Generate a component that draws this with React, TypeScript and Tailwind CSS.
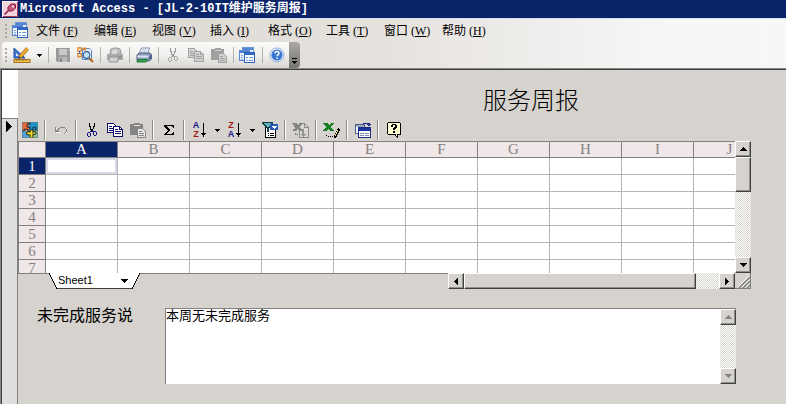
import type { ReactNode } from "react"

const menus = [
  { text: "文件", hot: "F" },
  { text: "编辑", hot: "E" },
  { text: "视图", hot: "V" },
  { text: "插入", hot: "I" },
  { text: "格式", hot: "O" },
  { text: "工具", hot: "T" },
  { text: "窗口", hot: "W" },
  { text: "帮助", hot: "H" },
]

const columns = ["A", "B", "C", "D", "E", "F", "G", "H", "I", "J"]
const rows = [1, 2, 3, 4, 5, 6, 7]

type IconProps = { children: ReactNode; w?: number; h?: number; smooth?: boolean }

function Svg({ children, w = 16, h = 16, smooth = false }: IconProps) {
  return (
    <svg width={w} height={h} viewBox={`0 0 ${w} ${h}`} fill="none" shapeRendering={smooth ? "auto" : "crispEdges"} aria-hidden="true">
      {children}
    </svg>
  )
}

function AccessIcon() {
  return (
    <Svg smooth>
      <rect x="0" y="0" width="16" height="16" fill="#f0d3dc" />
      <path d="M.500 16V.500H16" stroke="#fbeef2" />
      <path d="M1 15.500h14.500V1" stroke="#a23c5f" />
      <path d="M2.500 13.500l5-5" stroke="#8e1c42" strokeWidth="1.600" />
      <path d="M6 9V6l3-3h4l.500 1v3l-3 3H7z" fill="#c4587b" stroke="#8e1c42" />
      <path d="M10 4.500h2v2h-2z" fill="#f4dce4" />
    </Svg>
  )
}

function FormsIcon() {
  return (
    <Svg w={17} h={17}>
      <rect x="3.500" y="0.500" width="11" height="9" fill="#e3edfc" stroke="#6a94d6" />
      <path d="M4 1h10v2H4z" fill="#5586d4" />
      <rect x="0.500" y="3.500" width="10" height="10" fill="#e9f1fd" stroke="#5c88cf" />
      <path d="M1 4h9v2H1z" fill="#4a7fd3" />
      <path d="M2 8h2M2 10h2M2 12h2" stroke="#86a9df" />
      <rect x="5.500" y="5.500" width="10" height="10" fill="#f8fbff" stroke="#2f61b5" />
      <path d="M6 6h9v2H6z" fill="#2f69cc" />
      <path d="M7 10.500h2M10 10.500h4M7 13.500h2M10 13.500h4" stroke="#6f98db" />
    </Svg>
  )
}

function DesignIcon() {
  return (
    <Svg w={18} smooth>
      <path d="M1 1v10h11z" fill="#3d77cf" stroke="#1f4f9f" />
      <path d="M3 6v3h3z" fill="#eef3fb" />
      <path d="M14.500 1.500L7 10" stroke="#9c6410" strokeWidth="3.600" />
      <path d="M14.500 1.500L7 10" stroke="#f7b233" strokeWidth="2.200" />
      <path d="M5 12l1-3 2 2z" fill="#6b4a16" />
      <rect x="1" y="12.500" width="16" height="3" fill="#f3c057" stroke="#a57018" />
      <path d="M4 13v1M7 13v1M10 13v1M13 13v1" stroke="#7d5414" />
    </Svg>
  )
}

function SaveIcon() {
  return (
    <Svg>
      <path d="M1 1h14v14H2l-1-1z" fill="#9b9b9b" />
      <path d="M4 2h8v6H4z" fill="#c9c9c9" />
      <path d="M4 10h8v5H4z" fill="#b9b9b9" />
      <path d="M5 11h2v4H5z" fill="#878787" />
      <path d="M14 2h1v2h-1z" fill="#c9c9c9" />
    </Svg>
  )
}

function PreviewIcon() {
  return (
    <Svg w={17} smooth>
      <path d="M5.500 1.500h7l2 2v9h-9z" fill="#f8fbff" stroke="#5c83c2" />
      <path d="M7 4h5M7 10h4" stroke="#a5bde2" />
      <rect x="0.800" y="0.800" width="3.400" height="3.400" fill="#fbd9a1" stroke="#cd741c" />
      <rect x="0.800" y="6.500" width="3.400" height="3.400" fill="#fbd9a1" stroke="#cd741c" />
      <rect x="6" y="0.500" width="3" height="3" fill="#e9872d" />
      <path d="M2.500 4v3" stroke="#3d6fbd" />
      <circle cx="9.500" cy="8" r="3.300" fill="#c1e4f7" stroke="#30629f" strokeWidth="1.200" />
      <path d="M12 11l4 4" stroke="#b06a22" strokeWidth="2.200" />
    </Svg>
  )
}

function MailPrintIcon() {
  return (
    <Svg smooth>
      <path d="M3 7V5q0-4 4-4h3q4 0 4 4v2z" fill="#bdbdbd" stroke="#a0a0a0" />
      <path d="M5 7V4q1-1.500 3-1.500h2v4.500z" fill="#d9d9d9" />
      <path d="M0 7h16v6H0z" fill="#a9a9a9" />
      <path d="M2 10h9v5H2z" fill="#cfcfcf" stroke="#979797" />
      <path d="M12 9h2v2h-2z" fill="#888" />
    </Svg>
  )
}

function PrintIcon() {
  return (
    <Svg smooth>
      <path d="M5.500 1h8l-2 6H3z" fill="#fcfdff" stroke="#7c8db0" />
      <path d="M6 3h5M5.500 5h5" stroke="#a7b6d3" />
      <path d="M1 8l2-2h11l1.500 1.500V12L13 14H1z" fill="#8c9bbb" stroke="#4e5f88" />
      <path d="M1.500 8.500h11v2h-11z" fill="#dbe3f2" />
      <path d="M2 12.500h9.500l-1.500 2.500H1z" fill="#35a54c" stroke="#1e7a35" />
      <path d="M13 9l2-1.500v4L13 13z" fill="#53658f" />
    </Svg>
  )
}

function CutIcon({ color, handle }: { color: string; handle: string }) {
  return (
    <Svg>
      <path d="M5 1h1v3h1v3h1v3H7V8H6V5H5zM10 1h1v4h-1v2H9v2H8V7h1V4h1z" fill={color} />
      <path d="M6 9h4v1H6z" fill={handle} />
      <path d="M4 10h2v1H4zM3 11h1v3H3zM4 14h2v1H4zM6 11h1v3H6zM10 9h2v1h-2zM9 10h1v3H9zM12 10h1v3h-1zM10 13h2v1h-2z" fill={handle} />
    </Svg>
  )
}

function CopyIcon({ line, paper }: { line: string; paper: string }) {
  return (
    <Svg>
      <path d="M.500 1.500h6l2 2v7h-8z" fill={paper} stroke={line} />
      <path d="M2 4h3M2 6h5M2 8h5" stroke={line} />
      <path d="M6.500 4.500h6l3 3v7h-9z" fill={paper} stroke={line} />
      <path d="M12.500 4.500v3h3M8 7.500h3M8 9.500h6M8 11.500h6" stroke={line} />
    </Svg>
  )
}

function PasteIcon({ dark, light }: { dark: string; light: string }) {
  return (
    <Svg>
      <path d="M0 2h4V1h6v1h3v11H0z" fill={dark} />
      <path d="M4 3h6v1H4z" fill={light} />
      <path d="M7.500 6.500h5l3 3v6h-8z" fill={light} stroke={dark} />
      <path d="M9 9h3M9 11h5M9 13h5" stroke={dark} />
    </Svg>
  )
}

function HelpRoundIcon() {
  return (
    <Svg smooth>
      <circle cx="8" cy="8" r="7" fill="#f4f8ff" stroke="#91abd8" />
      <circle cx="8" cy="8" r="5.600" fill="#3a75d3" />
      <path d="M6 6.500q0-2 2-2t2 1.800q0 1-1 1.600t-1 1.300" stroke="#fff" strokeWidth="1.400" />
      <path d="M7.300 10.500h1.500v1.500H7.300z" fill="#fff" />
    </Svg>
  )
}

function OfficeIcon() {
  return (
    <Svg smooth>
      <path d="M0 0h8v9H0z" fill="#f26a3a" />
      <path d="M7 0h9v9H7z" fill="#1c97d4" />
      <path d="M0 9h7v7H0z" fill="#4fa3dd" />
      <path d="M9 8h7v8H9z" fill="#8fc79a" />
      <path d="M5 9q-2 1-1 3t3 1v3h5v-3q3 0 2-2t-3-1V8H8z" fill="#ffd91c" />
      <path d="M8 0v2Q5 1 5 3.500T8 5v3h3q-1-3 1.500-3T13 8h3M0 9h2q0-2 2-2t2 2h2M8 8v2q-3-1-3.500 1T8 13v3M11 8v2q3-1 3 1t-3 1v4" stroke="#1f3b42" strokeWidth="1.200" />
      <rect x="0.500" y="0.500" width="15" height="15" stroke="#5a7d82" strokeOpacity="0.700" />
    </Svg>
  )
}

function UndoIcon() {
  return (
    <Svg>
      <path d="M3 6h1v4h4v1H3zM12 6h2v5h-1v1h-1v-1h1V7h-1z" fill="#fff" />
      <path d="M2 5h1v3h1V7h1V6h2V5h5v1h1v1h1v3h-1v1h-1v1h-1v-1h1v-1h1V7h-1V6H7v1H6v1H5v1h2v1H2z" fill="#858585" />
    </Svg>
  )
}

function SumIcon() {
  return (
    <Svg>
      <path d="M3 3h10v3h-1V5h-1V4H6v1h1v1h1v1h1v2H8v1H7v1H6v1h5v-1h1v-1h1v3H3v-1h1v-1h1v-1h1V9h1V8H6V7H5V6H4V5H3z" fill="#000" />
    </Svg>
  )
}

function SortIcon({ desc }: { desc?: boolean }) {
  return (
    <span className="flex items-center font-['Liberation_Sans',sans-serif] text-[9px] leading-[9px] font-bold">
      <span className="flex w-2 flex-col items-center">
        <span className={desc ? "text-[#a01818]" : "text-[#16168c]"}>{desc ? "Z" : "A"}</span>
        <span className={desc ? "text-[#16168c]" : "text-[#a01818]"}>{desc ? "A" : "Z"}</span>
      </span>
      <Svg w={7}>
        <path d="M3 1h1v10h2v1H5v1H4v2H3v-2H2v-1H1v-1h2z" fill="#000" />
      </Svg>
    </span>
  )
}

function FilterIcon() {
  return (
    <Svg>
      <path d="M3.500 5.500h10v10h-10z" fill="#fff" stroke="#000" />
      <path d="M0 0h11v2l-4 4v4H5V6L0 2z" fill="#173d44" />
      <path d="M2 1h7v1L6 5 2 2z" fill="#5eb4bb" />
      <path d="M8 2h8v6H8z" fill="#2857be" />
      <path d="M10 4h5v1h-1v1h-1v1h-1V6h-1V5h-1z" fill="#fff" />
      <path d="M6 11h1M8 11h4M6 13h1M8 13h4" stroke="#000" />
    </Svg>
  )
}

function ImportIcon() {
  return (
    <Svg w={17}>
      <path d="M7.500 1.500h5l4 4v10h-9z" fill="#dad8d3" stroke="#8b8b8b" />
      <path d="M12.500 1.500v4h4" stroke="#8b8b8b" />
      <path d="M0 1h5v1h1v1h1V2h1V1h3v1h-1v1H9v1H8v2h1v1h1v2H7V8H6V7H5v2H1V7h2V5H2V3H1V2H0z" fill="#858585" />
      <path d="M10 7h2v5h2l-3 3-3-3h2z" fill="#929292" />
      <path d="M3 11h1v1h2v1H3z" fill="#858585" />
    </Svg>
  )
}

function ExcelIcon() {
  return (
    <Svg w={17}>
      <path d="M0 1h5v1h1v1h1V2h1V1h3v1h-1v1H9v1H8v2h1v1h1v1h1v1H7V8H6V7H5v1H4v1H0V8h1V7h1V6h1V4H2V3H1V2H0z" fill="#138021" />
      <path d="M15 6h1v1h1v2h-1v2h-1v2h-1v2h-1v1h-2v-3h1v-2h1V9h1V7h1z" fill="#000" />
      <path d="M14 8h1v2h-1v2h-1v2h-1v-2h1v-2h1z" fill="#e8d974" />
      <path d="M3 13h1v1H3zM5 14h1v1H5zM7 14h1v1H7zM9 15h1v-1H9z" fill="#000" />
    </Svg>
  )
}

function PropertyIcon() {
  return (
    <Svg>
      <path d="M.500 2.500h9v9h-9z" fill="#fff" stroke="#46608f" />
      <path d="M1 3h8v2H1z" fill="#9ba9c1" />
      <path d="M8 1.500h6v2M12 2h4M13 3h2" stroke="#20308c" />
      <path d="M3.500 5.500h12v10h-12z" fill="#fff" stroke="#1a2a80" />
      <path d="M4 6h11v3H4z" fill="#1832a0" />
      <path d="M5 11h4M10 11h4M5 13h4M10 13h4" stroke="#7d86a8" />
    </Svg>
  )
}

function HelpNoteIcon() {
  return (
    <Svg>
      <path d="M2 0h12v1h1v12h-3v3h-1v-1h-1v-1H9v-1H2v-1H1V1h1z" fill="#000" />
      <path d="M2 1h12v11h-3v2h-1v-2H2z" fill="#ffffd4" />
      <path d="M5 3h1V2h4v1h1v3h-1v1H9v1H7V6h1V5h1V3H7v2H5zM7 9h2v2H7z" fill="#000" />
    </Svg>
  )
}

function Arrow({ dir, color = "#000" }: { dir: "up" | "down" | "left" | "right"; color?: string }) {
  const d = {
    up: "M3 0h1v1h1v1h1v1h1v1H0V3h1V2h1V1h1z",
    down: "M0 0h7v1H6v1H5v1H4v1H3V3H2V2H1V1H0z",
    left: "M3 0h1v7H3V6H2V5H1V4H0V3h1V2h1V1h1z",
    right: "M0 0h1v1h1v1h1v1h1v1H3v1H2v1H1v1H0z",
  }[dir]
  const tall = dir === "left" || dir === "right"
  return <Svg w={tall ? 4 : 7} h={tall ? 7 : 4}><path d={d} fill={color} /></Svg>
}

function Caret() {
  return <Svg w={5} h={3}><path d="M0 0h5v1H4v1H3v1H2V2H1V1H0z" fill="#000" /></Svg>
}

function ToolButton({ label, children }: { label: string; children: ReactNode }) {
  return (
    <button type="button" aria-label={label} className="flex h-5 w-[23px] shrink-0 items-center justify-center">
      {children}
    </button>
  )
}

function CaretButton({ label }: { label: string }) {
  return (
    <button type="button" aria-label={label} className="flex h-5 w-3 shrink-0 items-center justify-center">
      <Caret />
    </button>
  )
}

function BarSep() {
  return (
    <div className="flex w-1.5 shrink-0 justify-center">
      <div className="h-4 w-px bg-[#b4b2ae]" />
    </div>
  )
}

function SheetSep() {
  return (
    <div className="flex w-2 shrink-0 justify-center">
      <div className="h-5 w-0.5 border-r border-l border-r-white border-l-[#8b8984]" />
    </div>
  )
}

function Grip() {
  return (
    <div className="flex w-2 shrink-0 flex-col items-center gap-0.5">
      <div className="size-0.5 bg-[#aaa8a3]" />
      <div className="size-0.5 bg-[#aaa8a3]" />
      <div className="size-0.5 bg-[#aaa8a3]" />
      <div className="size-0.5 bg-[#aaa8a3]" />
    </div>
  )
}

const raised = "border border-t-white border-r-[#404040] border-b-[#404040] border-l-white bg-[#d6d3ce] shadow-[inset_-1px_-1px_0_#909090]"
const track = "bg-[repeating-conic-gradient(#fff_0_25%,#d6d3ce_0_50%)] bg-[length:2px_2px]"

function ScrollButton({ dir, disabled }: { dir: "up" | "down" | "left" | "right"; disabled?: boolean }) {
  return (
    <button type="button" aria-label={`scroll ${dir}`} disabled={disabled} className={`flex size-4 shrink-0 items-center justify-center ${raised}`}>
      <Arrow dir={dir} color={disabled ? "#858585" : "#000"} />
    </button>
  )
}

function MainToolbar() {
  return (
    <div className="flex h-[26px] items-stretch pl-0.5">
      <div className="flex items-center rounded-l bg-linear-to-b from-[#fbfafa] via-[#f1f0ee] to-[#d9d6d1] pr-px">
        <Grip />
        <ToolButton label="设计"><DesignIcon /></ToolButton>
        <CaretButton label="视图选项" />
        <BarSep />
        <ToolButton label="保存"><SaveIcon /></ToolButton>
        <ToolButton label="搜索"><PreviewIcon /></ToolButton>
        <BarSep />
        <ToolButton label="发送"><MailPrintIcon /></ToolButton>
        <BarSep />
        <ToolButton label="打印"><PrintIcon /></ToolButton>
        <BarSep />
        <ToolButton label="剪切"><CutIcon color="#969696" handle="#a6a6a6" /></ToolButton>
        <ToolButton label="复制"><CopyIcon line="#a3a3a3" paper="#d2d2d2" /></ToolButton>
        <ToolButton label="粘贴"><PasteIcon dark="#a0a0a0" light="#d2d2d2" /></ToolButton>
        <BarSep />
        <ToolButton label="数据库窗口"><FormsIcon /></ToolButton>
        <BarSep />
        <ToolButton label="帮助"><HelpRoundIcon /></ToolButton>
      </div>
      <button type="button" aria-label="工具栏选项" className="flex w-[11px] flex-col items-center justify-end gap-0.5 rounded-r bg-linear-to-b from-[#aaa8a5] to-[#777573] pb-1">
        <div className="h-px w-[5px] bg-black" />
        <Caret />
      </button>
    </div>
  )
}

function SheetToolbar() {
  return (
    <div className="mt-1 flex h-5 items-center">
      <ToolButton label="Office"><OfficeIcon /></ToolButton>
      <SheetSep />
      <ToolButton label="撤消"><UndoIcon /></ToolButton>
      <SheetSep />
      <ToolButton label="剪切"><CutIcon color="#000" handle="#14148c" /></ToolButton>
      <ToolButton label="复制"><CopyIcon line="#10106c" paper="#fff" /></ToolButton>
      <ToolButton label="粘贴"><PasteIcon dark="#858585" light="#e8e6e2" /></ToolButton>
      <SheetSep />
      <ToolButton label="求和"><SumIcon /></ToolButton>
      <SheetSep />
      <ToolButton label="升序"><SortIcon /></ToolButton>
      <CaretButton label="升序选项" />
      <ToolButton label="降序"><SortIcon desc /></ToolButton>
      <CaretButton label="降序选项" />
      <ToolButton label="筛选"><FilterIcon /></ToolButton>
      <SheetSep />
      <ToolButton label="刷新"><ImportIcon /></ToolButton>
      <SheetSep />
      <ToolButton label="导出到 Excel"><ExcelIcon /></ToolButton>
      <SheetSep />
      <ToolButton label="属性"><PropertyIcon /></ToolButton>
      <SheetSep />
      <ToolButton label="帮助"><HelpNoteIcon /></ToolButton>
    </div>
  )
}

function Sheet() {
  return (
    <section className="mt-px mr-[35px]">
      <div className="flex h-[132px]">
        <div className="min-w-0 flex-1 overflow-hidden bg-white">
          <table className="w-[748px] table-fixed border-separate border-spacing-0 font-['Liberation_Serif',serif] text-[15px] leading-[15px] text-[#858080]">
            <thead>
              <tr>
                <th className="h-[17px] w-7 border border-[#858080] bg-[#efe7e8] p-0" />
                {columns.map((c) => (
                  <th key={c} scope="col" className={`h-[17px] border-t border-r border-b border-[#858080] p-0 font-normal ${c === "A" ? "bg-[#0a246a] text-white" : "bg-[#efe7e8]"}`}>
                    {c}
                  </th>
                ))}
              </tr>
            </thead>
            <tbody>
              {rows.map((r) => (
                <tr key={r}>
                  <th scope="row" className={`h-[17px] border-r border-b border-l border-[#858080] p-0 font-normal ${r === 1 ? "bg-[#0a246a] text-white" : "bg-[#efe7e8]"}`}>
                    {r}
                  </th>
                  {columns.map((c) => (
                    <td key={c} className={`h-[17px] border-r border-b border-[#b5b5b5] p-0 ${r === 1 && c === "A" ? "shadow-[inset_0_0_0_2px_#d5d9e8]" : ""}`} />
                  ))}
                </tr>
              ))}
            </tbody>
          </table>
        </div>
        <div className={`flex w-4 flex-col ${track}`}>
          <ScrollButton dir="up" />
          <div className={`h-[35px] ${raised}`} />
          <div className="flex-1" />
          <ScrollButton dir="down" />
        </div>
      </div>

      <div className="flex h-4">
        <div className="h-4 w-[31px] border-t border-[#858080]" />
        <button type="button" className="flex h-4 font-['Liberation_Sans',sans-serif] text-[11px] leading-[15px]">
          <Svg w={8}><path d="M0 0h8v16z" fill="#fff" /><path d="M0 0l8 16" stroke="#000" /></Svg>
          <span className="flex h-4 w-[75px] items-center justify-between border-b border-[#404040] bg-white pr-1 pl-px">
            Sheet1
            <Arrow dir="down" />
          </span>
          <Svg w={8}><path d="M0 0h8L0 16z" fill="#fff" /><path d="M8 0L0 16" stroke="#000" /></Svg>
        </button>
        <div className="flex-1 border-t border-[#858080]" />
        <div className={`flex w-[287px] ${track}`}>
          <ScrollButton dir="left" />
          <div className={`w-[232px] ${raised}`} />
          <div className="flex-1" />
          <ScrollButton dir="right" />
        </div>
        <div className="flex size-4 items-end justify-end border-r border-b border-[#858080]">
          <Svg w={12} h={12} smooth>
            <path d="M1 12L12 1M5 12l7-7M9 12l3-3" stroke="#808080" strokeWidth="1.500" />
            <path d="M0 11L11 0M4 11l7-7M8 11l3-3" stroke="#fff" />
          </Svg>
        </div>
      </div>
    </section>
  )
}

function App() {
  return (
    <div className="flex min-h-screen flex-col bg-[#d6d3ce] font-['Liberation_Sans','Noto_Sans_CJK_SC',sans-serif] text-black">
      <header className="bg-linear-to-r from-[#d9d6cf] via-[#e6e3df] to-[#f7f7f7] to-85%">
        <div className="flex h-[18px] items-center gap-0.5 bg-[#0a246a] pl-0.5 font-['Liberation_Mono','Noto_Sans_CJK_SC',monospace] text-xs leading-[18px] font-bold whitespace-nowrap text-white">
          <AccessIcon />
          <p>Microsoft Access - [JL-2-10IT维护服务周报]</p>
        </div>
        <nav className="flex h-6 items-center border-t border-[#d3e0ee] pl-0.5">
          <Grip />
          <div className="flex w-[26px] pl-0.5"><FormsIcon /></div>
          {menus.map((m) => (
            <button key={m.hot} type="button" className="w-[58px] text-left font-['Liberation_Serif','Noto_Sans_CJK_SC',serif] text-xs leading-5 whitespace-nowrap">
              {m.text} (<u>{m.hot}</u>)
            </button>
          ))}
        </nav>
        <MainToolbar />
      </header>

      <div className="flex flex-1 border-t border-l border-[#858585]">
        <div className="flex min-w-0 flex-1 border-t border-l border-[#404040]">
          <aside className="flex w-4 shrink-0 flex-col">
            <div className="h-12 bg-white" />
            <button type="button" aria-label="记录选定器" className="flex flex-1 items-start border-t border-r border-[#858080] bg-[#dedede] pt-0.5 pl-1">
              <Svg w={6} h={11}><path d="M0 0h1v1h1v1h1v1h1v1h1v1h1v1H5v1H4v1H3v1H2v1H1v1H0z" fill="#000" /></Svg>
            </button>
          </aside>

          <main className="min-w-0 flex-1">
            <h1 className="pt-3.5 pb-0.5 pl-[465px] font-['Noto_Sans_CJK_SC',sans-serif] text-2xl leading-[30px] font-light">服务周报</h1>
            <SheetToolbar />
            <Sheet />
            <div className="mt-[19px] mr-[50px] flex">
              <label htmlFor="unfinished" className="w-[147px] shrink-0 pl-[19px] text-base leading-4">未完成服务说</label>
              <div className="flex h-[76px] min-w-0 flex-1 border-t border-l border-[#858080] bg-white">
                <textarea
                  id="unfinished"
                  defaultValue="本周无未完成服务"
                  className="min-w-0 flex-1 resize-none overflow-hidden text-[13px] leading-[14px] outline-none"
                />
                <div className={`flex w-4 flex-col justify-between ${track}`}>
                  <ScrollButton dir="up" disabled />
                  <ScrollButton dir="down" disabled />
                </div>
              </div>
            </div>
          </main>
        </div>
      </div>
    </div>
  )
}

export default App
